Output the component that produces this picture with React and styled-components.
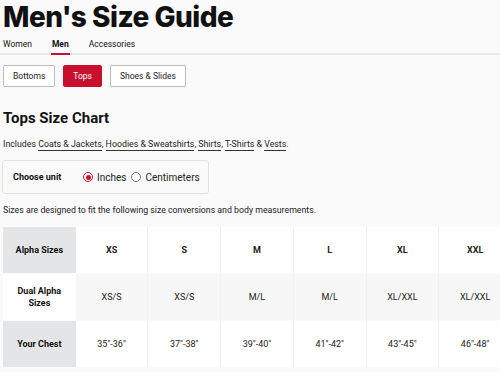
import React, { useState } from 'react';
import styled, { createGlobalStyle } from 'styled-components';

const GlobalStyle = createGlobalStyle`
  body {
    margin: 0;
    background: #fafafa;
    font-family: Roboto, "Noto Sans", Arial, sans-serif;
    color: #111;
    overflow: hidden;
  }
`;

const Page = styled.div`
  width: 500px;
  height: 372px;
  overflow: hidden;
`;

const Title = styled.h1`
  margin: 0;
  padding-left: 3px;
  font-family: Inter, Roboto, sans-serif;
  font-size: 28px;
  line-height: 34px;
  font-weight: 800;
  letter-spacing: -0.5px;
`;

const TabBar = styled.div`
  display: flex;
  gap: 18px;
  padding: 4px 0 0 2px;
  border-bottom: 2px solid #e8e8e8;
`;

const Tab = styled.div`
  padding: 0 1px 3px;
  font-size: 8.5px;
  line-height: 12px;
  font-weight: ${(p) => (p.active ? 700 : 400)};
  margin-bottom: -2px;
  border-bottom: 2px solid ${(p) => (p.active ? '#c8102e' : 'transparent')};
`;

const Chips = styled.div`
  display: flex;
  gap: 8px;
  padding: 10px 0 0 3px;
`;

const Chip = styled.button`
  height: 22px;
  padding: 0 9px;
  border-radius: 2px;
  font-family: inherit;
  font-size: 8.5px;
  color: ${(p) => (p.active ? '#fff' : '#222')};
  background: ${(p) => (p.active ? '#c8102e' : '#fff')};
  border: 1px solid ${(p) => (p.active ? '#c8102e' : '#bdbdbd')};
`;

const Section = styled.div`
  padding: 0 0 0 3px;
`;

const Heading = styled.h2`
  margin: 22px 0 0;
  font-size: 15px;
  line-height: 18px;
  font-weight: 700;
`;

const Includes = styled.p`
  margin: 11px 0 0;
  font-size: 8.8px;
  line-height: 12px;
  color: #222;
`;

const Link = styled.span`
  border-bottom: 1px solid #333;
  padding-bottom: 1px;
`;

const UnitBox = styled.div`
  margin: 10px 0 0 -1px;
  width: 207px;
  height: 34px;
  border: 1px solid #e2e2e2;
  border-radius: 3px;
  display: flex;
  align-items: center;
  padding-left: 10px;
  box-sizing: border-box;
`;

const UnitLabel = styled.span`
  font-size: 9px;
  font-weight: 700;
  width: 70px;
`;

const RadioLabel = styled.label`
  display: flex;
  align-items: center;
  gap: 4px;
  margin-right: 5px;
  font-size: 10px;
  color: #222;
`;

const RadioDot = styled.span`
  width: 8px;
  height: 8px;
  border-radius: 50%;
  border: 1px solid ${(p) => (p.checked ? '#c8102e' : '#777')};
  background: #fff;
  display: flex;
  align-items: center;
  justify-content: center;
  &::after {
    content: '';
    width: 5px;
    height: 5px;
    border-radius: 50%;
    background: ${(p) => (p.checked ? '#c8102e' : 'transparent')};
  }
`;

const Note = styled.p`
  margin: 10px 0 0;
  font-size: 8.75px;
  line-height: 12px;
  color: #222;
`;

const Table = styled.table`
  margin-top: 10px;
  border-collapse: separate;
  border-spacing: 0 1px;
  table-layout: fixed;
  width: 509px;
`;

const Cell = styled.td`
  width: 72px;
  height: 46px;
  padding: 0 4px;
  box-sizing: border-box;
  text-align: center;
  font-size: 9px;
  line-height: 12px;
  font-weight: ${(p) => (p.bold ? 700 : 400)};
  color: #222;
  background: ${(p) => p.bg};
  border-right: 1px solid #f1f1f1;
`;

const RowHead = styled.th`
  width: 72px;
  height: 46px;
  padding: 0 4px;
  box-sizing: border-box;
  font-size: 9px;
  line-height: 12px;
  font-weight: 700;
  color: #111;
  background: ${(p) => p.bg};
`;

const rows = [
  { label: 'Alpha Sizes', head: '#e4e5e7', cell: '#fff', bold: true, values: ['XS', 'S', 'M', 'L', 'XL', 'XXL'] },
  { label: 'Dual Alpha Sizes', head: '#fff', cell: '#f7f7f7', values: ['XS/S', 'XS/S', 'M/L', 'M/L', 'XL/XXL', 'XL/XXL'] },
  { label: 'Your Chest', head: '#e4e5e7', cell: '#fff', values: ['35"-36"', '37"-38"', '39"-40"', '41"-42"', '43"-45"', '46"-48"'] },
];

export default function App() {
  const [unit, setUnit] = useState('in');
  return (
    <Page>
      <GlobalStyle />
      <Title>Men's Size Guide</Title>
      <TabBar>
        <Tab>Women</Tab>
        <Tab active>Men</Tab>
        <Tab>Accessories</Tab>
      </TabBar>
      <Chips>
        <Chip>Bottoms</Chip>
        <Chip active>Tops</Chip>
        <Chip>Shoes &amp; Slides</Chip>
      </Chips>
      <Section>
        <Heading>Tops Size Chart</Heading>
        <Includes>
          Includes <Link>Coats &amp; Jackets</Link>, <Link>Hoodies &amp; Sweatshirts</Link>,{' '}
          <Link>Shirts</Link>, <Link>T-Shirts</Link> &amp; <Link>Vests</Link>.
        </Includes>
        <UnitBox>
          <UnitLabel>Choose unit</UnitLabel>
          <RadioLabel onClick={() => setUnit('in')}>
            <RadioDot checked={unit === 'in'} />
            Inches
          </RadioLabel>
          <RadioLabel onClick={() => setUnit('cm')}>
            <RadioDot checked={unit === 'cm'} />
            Centimeters
          </RadioLabel>
        </UnitBox>
        <Note>Sizes are designed to fit the following size conversions and body measurements.</Note>
        <Table>
          <tbody>
            {rows.map((r) => (
              <tr key={r.label}>
                <RowHead bg={r.head}>{r.label}</RowHead>
                {r.values.map((v, i) => (
                  <Cell key={i} bg={r.cell} bold={r.bold}>{v}</Cell>
                ))}
              </tr>
            ))}
          </tbody>
        </Table>
      </Section>
    </Page>
  );
}
